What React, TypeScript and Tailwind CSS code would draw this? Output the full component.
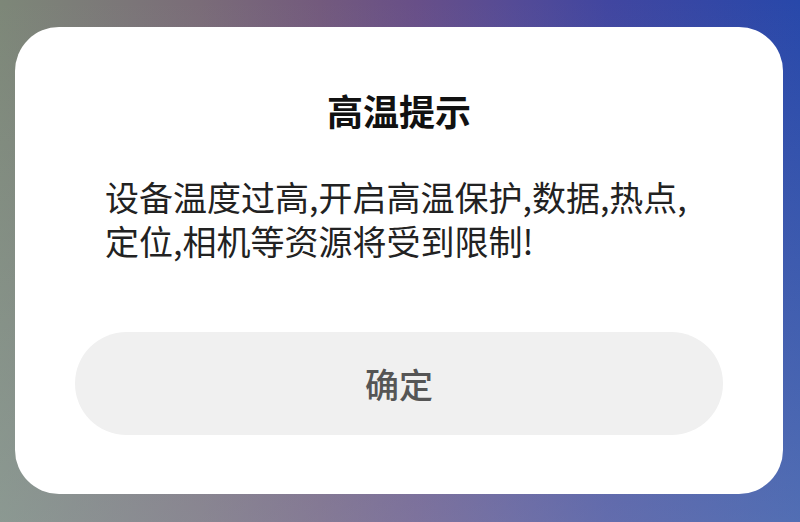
import React from "react";

const CJK = "font-['Noto_Sans_CJK_SC','Noto_Sans',sans-serif]";

export default function App() {
  return (
    <div
      className={`h-[522px] w-[800px] overflow-hidden pl-[15px] pt-[27px] ${CJK} bg-[linear-gradient(to_bottom,rgba(170,190,200,0)_0%,rgba(170,190,200,0.32)_100%),linear-gradient(to_right,#7d8778_0%,#7a6c78_25%,#735a7d_40%,#684f88_52%,#554b96_64%,#4146a0_76%,#2848aa_100%)]`}
    >
      <div className="flex h-[467px] w-[768px] flex-col items-stretch rounded-[44px] bg-white">
        <h1 className="mt-[59px] text-center text-[36px] font-bold leading-[48px] text-[#111]">
          高温提示
        </h1>
        <div className="mt-[41px] flex flex-col px-[90px] text-[34px] leading-[44px] whitespace-nowrap text-[#222]">
          <span>设备温度过高,开启高温保护,数据,热点,</span>
          <span>定位,相机等资源将受到限制!</span>
        </div>
        <button
          type="button"
          className="mx-[60px] mt-[69px] flex h-[103px] items-center justify-center rounded-full bg-[#f0f0f0] text-[34px] font-medium text-[#555]"
        >
          确定
        </button>
      </div>
    </div>
  );
}
